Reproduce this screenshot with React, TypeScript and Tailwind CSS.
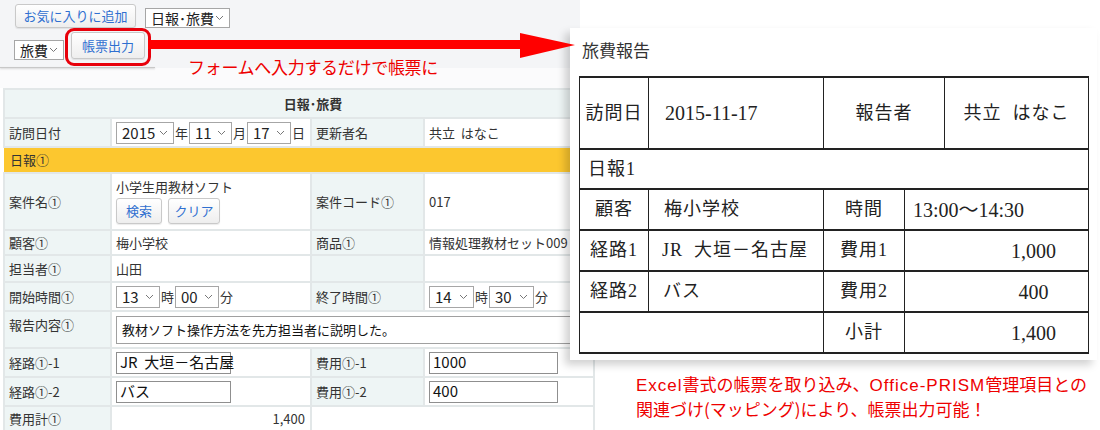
import React from "react";

const SANS = "font-['Noto_Sans_CJK_JP',sans-serif]";
const SERIF = "font-['Liberation_Serif','Noto_Sans_CJK_JP',serif]";

function Chev() {
  return (
    <svg width="9" height="6" viewBox="0 0 9 6" className="shrink-0">
      <path d="M1 1l3.5 3.5L8 1" fill="none" stroke="#777" strokeWidth="1" />
    </svg>
  );
}

function Sel({ v, className }: { v: string; className: string }) {
  return (
    <span
      className={`inline-flex items-center justify-between border border-[#a6a6a6] bg-white pl-[5px] pr-[5px] text-[#222] ${className}`}
    >
      <span className="leading-none">{v}</span>
      <Chev />
    </span>
  );
}

function Btn({ children, className }: { children: React.ReactNode; className: string }) {
  return (
    <span
      className={`inline-flex items-center justify-center rounded-[3px] border border-[#c9c9c9] bg-gradient-to-b from-white to-[#eeeeee] text-[13px] text-[#2f6fd0] shadow-[0_1px_1px_rgba(0,0,0,0.08)] ${className}`}
    >
      {children}
    </span>
  );
}

function Inp({ v, className }: { v: string; className: string }) {
  return (
    <span
      className={`inline-flex items-center border border-[#8f8f8f] bg-white px-[3px] text-[15px] text-[#111] whitespace-pre ${className}`}
    >
      {v}
    </span>
  );
}

const L = "bg-[#eef5f5] border-2 border-[#e2e7e8] px-[4px] text-[13px] text-[#333] align-middle";
const V = "bg-white border-2 border-[#e2e7e8] px-[4px] text-[13px] text-[#333] align-middle";

// 帳票のセル
const RC = "border-x border-y-2 border-[#222] text-[18px] tracking-[1px] text-[#222] align-middle";
const NUM = "text-[20px] tracking-normal";

// 注釈の英字
const LAT = "font-['Liberation_Sans','Noto_Sans_CJK_JP',sans-serif] tracking-[1px]";

export default function App() {
  return (
    <div className={`relative w-[1100px] h-[430px] overflow-hidden bg-white ${SANS}`}>
      <div className="w-[580px]">
        {/* ツールバー */}
        <div className="h-[88px] bg-[#fbfbfc]">
          <div className="h-[68px] bg-[#f4f5f7] flex flex-col">
            <div className="flex items-center gap-[9px] pl-[15px] pt-[3px]">
              <Btn className="w-[121px] h-[24px]">お気に入りに追加</Btn>
              <Sel v="日報･旅費" className="w-[85px] h-[20px] mt-[5px] text-[14px]" />
            </div>
            <div className="flex items-center gap-[1px] pl-[14px]">
              <Sel v="旅費" className="w-[50px] h-[20px] mt-[6px] text-[14px]" />
              <div className="rounded-[9px] border-[3px] border-[#e8000b] px-[3px] pt-[1px] pb-[4px]">
                <Btn className="w-[74px] h-[27px]">帳票出力</Btn>
              </div>
            </div>
            <div className="mt-auto w-[155px] h-px bg-[#c8c8c8] shadow-[0_1px_2px_rgba(0,0,0,0.2)]" />
          </div>
        </div>

        {/* 入力フォーム */}
        <table className="ml-[3px] w-[590px] table-fixed border-collapse">
          <colgroup>
            <col className="w-[107px]" />
            <col className="w-[200px]" />
            <col className="w-[113px]" />
            <col className="w-[170px]" />
          </colgroup>
          <tbody>
            <tr className="h-[29px]">
              <td colSpan={4} className={`${L} text-center font-bold pl-[32px]`}>日報･旅費</td>
            </tr>
            <tr className="h-[29px]">
              <td className={L}>訪問日付</td>
              <td className={`${V} whitespace-nowrap`}>
                <span className="flex items-center">
                  <Sel v="2015" className="w-[58px] h-[22px] text-[15px]" />
                  <span className="mx-[1px]">年</span>
                  <Sel v="11" className="w-[43px] h-[22px] text-[15px]" />
                  <span className="mx-[1px]">月</span>
                  <Sel v="17" className="w-[44px] h-[22px] text-[15px]" />
                  <span className="mx-[1px]">日</span>
                </span>
              </td>
              <td className={L}>更新者名</td>
              <td className={V}>共立&nbsp;&nbsp;はなこ</td>
            </tr>
            <tr className="h-[26px]">
              <td colSpan={4} className="bg-[#fcc72f] px-[6px] text-[13px] text-[#333] border-y-2 border-[#e2e7e8]">日報①</td>
            </tr>
            <tr className="h-[57px]">
              <td className={L}>案件名①</td>
              <td className={V}>
                <div className="leading-[16px]">小学生用教材ソフト</div>
                <div className="flex gap-[6px] mt-[3px]">
                  <Btn className="w-[46px] h-[26px]">検索</Btn>
                  <Btn className="w-[52px] h-[26px]">クリア</Btn>
                </div>
              </td>
              <td className={L}>案件コード①</td>
              <td className={V}>017</td>
            </tr>
            <tr className="h-[25px]">
              <td className={L}>顧客①</td>
              <td className={V}>梅小学校</td>
              <td className={L}>商品①</td>
              <td className={V}>情報処理教材セット009</td>
            </tr>
            <tr className="h-[27px]">
              <td className={L}>担当者①</td>
              <td className={V}>山田</td>
              <td className={L}></td>
              <td className={V}></td>
            </tr>
            <tr className="h-[29px]">
              <td className={L}>開始時間①</td>
              <td className={`${V} whitespace-nowrap`}>
                <span className="flex items-center">
                  <Sel v="13" className="w-[44px] h-[22px] text-[15px]" />
                  <span className="mx-[1px]">時</span>
                  <Sel v="00" className="w-[44px] h-[22px] text-[15px]" />
                  <span className="mx-[1px]">分</span>
                </span>
              </td>
              <td className={L}>終了時間①</td>
              <td className={`${V} whitespace-nowrap`}>
                <span className="flex items-center">
                  <Sel v="14" className="w-[45px] h-[22px] text-[15px]" />
                  <span className="mx-[1px]">時</span>
                  <Sel v="30" className="w-[45px] h-[22px] text-[15px]" />
                  <span className="mx-[1px]">分</span>
                </span>
              </td>
            </tr>
            <tr className="h-[37px]">
              <td className={`${L} align-top pt-[3px]`}>報告内容①</td>
              <td colSpan={3} className={V}>
                <div className="h-[28px] border border-[#a0a0a0] bg-white px-[5px] flex items-center text-[13px] text-[#111] whitespace-nowrap">
                  教材ソフト操作方法を先方担当者に説明した。
                </div>
              </td>
            </tr>
            <tr className="h-[29px]">
              <td className={L}>経路①-1</td>
              <td className={V}>
                <Inp v={"JR  大垣－名古屋"} className="w-[115px] h-[22px]" />
              </td>
              <td className={L}>費用①-1</td>
              <td className={V}>
                <Inp v="1000" className="w-[129px] h-[22px]" />
              </td>
            </tr>
            <tr className="h-[29px]">
              <td className={L}>経路①-2</td>
              <td className={V}>
                <Inp v="バス" className="w-[115px] h-[22px]" />
              </td>
              <td className={L}>費用①-2</td>
              <td className={V}>
                <Inp v="400" className="w-[129px] h-[22px]" />
              </td>
            </tr>
            <tr className="h-[26px]">
              <td className={L}>費用計①</td>
              <td className={`${V} text-right pr-[5px]`}>1,400</td>
              <td colSpan={2} className={V}></td>
            </tr>
          </tbody>
        </table>
      </div>

      {/* 注釈 */}
      <div className="absolute left-[188px] top-[57px] text-[17px] leading-[20px] text-[#ee0000] tracking-[-0.3px]">
        フォームへ入力するだけで帳票に
      </div>

      {/* 帳票プレビュー */}
      <div className="absolute left-[570px] top-[28px] w-[527px]">
        <div className="h-[332px] bg-white shadow-[-5px_5px_8px_rgba(0,0,0,0.18)] pl-[9px] pr-[9px]">
          <div className={`${SERIF} pt-[13px] pl-[3px] text-[17px] leading-[22px] text-[#333]`}>旅費報告</div>
          <table className={`${SERIF} mt-[13px] w-[509px] table-fixed border-collapse`}>
            <colgroup>
              <col className="w-[69px]" />
              <col className="w-[175px]" />
              <col className="w-[81px]" />
              <col className="w-[40px]" />
              <col className="w-[144px]" />
            </colgroup>
            <tbody>
              <tr className="h-[72px]">
                <td className={`${RC} text-center`}>訪問日</td>
                <td className={`${RC} ${NUM} pl-[16px]`}>2015-11-17</td>
                <td colSpan={2} className={`${RC} text-center`}>報告者</td>
                <td className={`${RC} text-center`}>共立&nbsp;&nbsp;はなこ</td>
              </tr>
              <tr className="h-[40px]">
                <td colSpan={5} className={`${RC} pl-[8px]`}>日報1</td>
              </tr>
              <tr className="h-[41px]">
                <td className={`${RC} text-center`}>顧客</td>
                <td className={`${RC} pl-[15px]`}>梅小学校</td>
                <td className={`${RC} text-center`}>時間</td>
                <td colSpan={2} className={`${RC} ${NUM} pl-[8px]`}>13:00～14:30</td>
              </tr>
              <tr className="h-[41px]">
                <td className={`${RC} text-center`}>経路1</td>
                <td className={`${RC} pl-[13px] whitespace-nowrap`}>JR&nbsp;&nbsp;大垣－名古屋</td>
                <td className={`${RC} text-center`}>費用1</td>
                <td colSpan={2} className={`${RC} ${NUM} pl-[74px] text-center`}>1,000</td>
              </tr>
              <tr className="h-[41px]">
                <td className={`${RC} text-center`}>経路2</td>
                <td className={`${RC} pl-[14px]`}>バス</td>
                <td className={`${RC} text-center`}>費用2</td>
                <td colSpan={2} className={`${RC} ${NUM} pl-[74px] text-center`}>400</td>
              </tr>
              <tr className="h-[41px]">
                <td colSpan={2} className={RC}></td>
                <td className={`${RC} text-center`}>小計</td>
                <td colSpan={2} className={`${RC} ${NUM} pl-[74px] text-center`}>1,400</td>
              </tr>
            </tbody>
          </table>
        </div>
        <div className="mt-[12px] ml-[66px] text-[17px] leading-[23px] text-[#ee0000]">
          <div className="whitespace-nowrap">
            <span className={LAT}>Excel</span>書式の帳票を取り込み、<span className={LAT}>Office-PRISM</span>管理項目との
          </div>
          <div className="whitespace-nowrap">関連づけ(マッピング)により、帳票出力可能！</div>
        </div>
      </div>

      {/* 矢印 */}
      <svg className="absolute left-[148px] top-[32px]" width="428" height="28" viewBox="0 0 428 28">
        <rect x="0" y="8" width="376" height="9" fill="#ff0000" />
        <polygon points="372,1 427,13 372,26" fill="#ff0000" />
      </svg>
    </div>
  );
}
